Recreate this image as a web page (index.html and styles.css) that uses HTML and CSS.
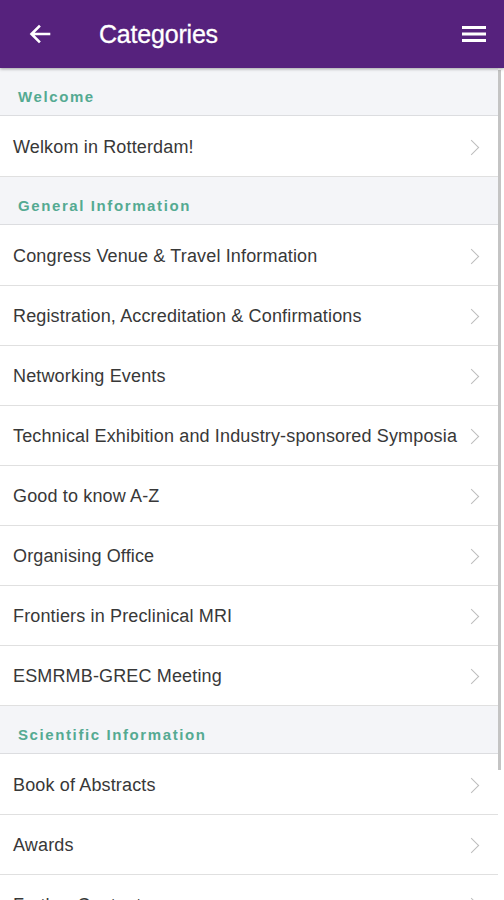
FILE: index.html
```html
<!DOCTYPE html>
<html>
<head>
<meta charset="utf-8">
<link rel="stylesheet" href="styles.css">
</head>
<body>
<div class="app">
  <header class="topbar">
    <svg class="back" width="22" height="20" viewBox="0 0 22 20"><path d="M20 10H3M10 2.5L2.5 10L10 17.5" fill="none" stroke="#fff" stroke-width="2.6" stroke-linecap="square"/></svg>
    <h1 class="title">Categories</h1>
    <svg class="menu" width="26" height="18" viewBox="0 0 26 18"><rect x="1" y="1" width="24" height="3" fill="#fff"/><rect x="1" y="7.5" width="24" height="3" fill="#fff"/><rect x="1" y="14" width="24" height="3" fill="#fff"/></svg>
  </header>
  <main class="list">
    <div class="section">Welcome</div>
    <div class="item"><span>Welkom in Rotterdam!</span><i class="chev"></i></div>
    <div class="section">General Information</div>
    <div class="item"><span>Congress Venue &amp; Travel Information</span><i class="chev"></i></div>
    <div class="item"><span>Registration, Accreditation &amp; Confirmations</span><i class="chev"></i></div>
    <div class="item"><span>Networking Events</span><i class="chev"></i></div>
    <div class="item"><span>Technical Exhibition and Industry-sponsored Symposia</span><i class="chev"></i></div>
    <div class="item"><span>Good to know A-Z</span><i class="chev"></i></div>
    <div class="item"><span>Organising Office</span><i class="chev"></i></div>
    <div class="item"><span>Frontiers in Preclinical MRI</span><i class="chev"></i></div>
    <div class="item"><span>ESMRMB-GREC Meeting</span><i class="chev"></i></div>
    <div class="section">Scientific Information</div>
    <div class="item"><span>Book of Abstracts</span><i class="chev"></i></div>
    <div class="item"><span>Awards</span><i class="chev"></i></div>
    <div class="item"><span>Further Content</span><i class="chev"></i></div>
  </main>
  <div class="scrollbar"></div>
</div>
</body>
</html>
```
FILE: styles.css
```css
* { box-sizing: border-box; }
html, body { margin: 0; padding: 0; }
body {
  width: 504px;
  height: 900px;
  overflow: hidden;
  background: #fff;
  font-family: "Liberation Sans", Arial, sans-serif;
}
.app { position: relative; height: 900px; overflow: hidden; }
.topbar {
  height: 68px;
  background: #56227d;
  display: flex;
  align-items: center;
  padding: 0 17px 0 29px;
  box-shadow: 0 1px 3px rgba(0,0,0,0.35);
  position: relative;
  z-index: 2;
}
.back { flex: none; margin-top: 0; }
.title {
  margin: 0 0 0 48px;
  color: #fff;
  font-size: 25px;
  font-weight: 500;
  letter-spacing: -0.2px;
  flex: 1;
  -webkit-text-stroke: 0.3px #fff;
}
.menu { flex: none; }
.list { padding-right: 6px; }
.section {
  height: 48px;
  background: #f4f5f8;
  border-bottom: 1px solid #dcdde0;
  color: #54aa92;
  font-size: 15px;
  font-weight: bold;
  letter-spacing: 1.6px;
  padding: 21px 0 0 18px;
  line-height: 16px;
}
.item {
  height: 60px;
  display: flex;
  align-items: center;
  padding: 2px 0 0 13px;
  color: #383838;
  font-size: 18px;
  letter-spacing: 0.15px;
  border-bottom: 1px solid #e0e0e0;
  justify-content: space-between;
}
.section + .item { height: 61px; }
.item span { white-space: nowrap; }
.chev {
  width: 11px;
  height: 11px;
  border-top: 1.5px solid #bdbdbd;
  border-right: 1.5px solid #bdbdbd;
  transform: rotate(45deg);
  margin-right: 21px;
  flex: none;
}
.scrollbar {
  position: absolute;
  right: 3px;
  top: 70px;
  width: 3px;
  height: 700px;
  background: #c4c4c4;
}
```
